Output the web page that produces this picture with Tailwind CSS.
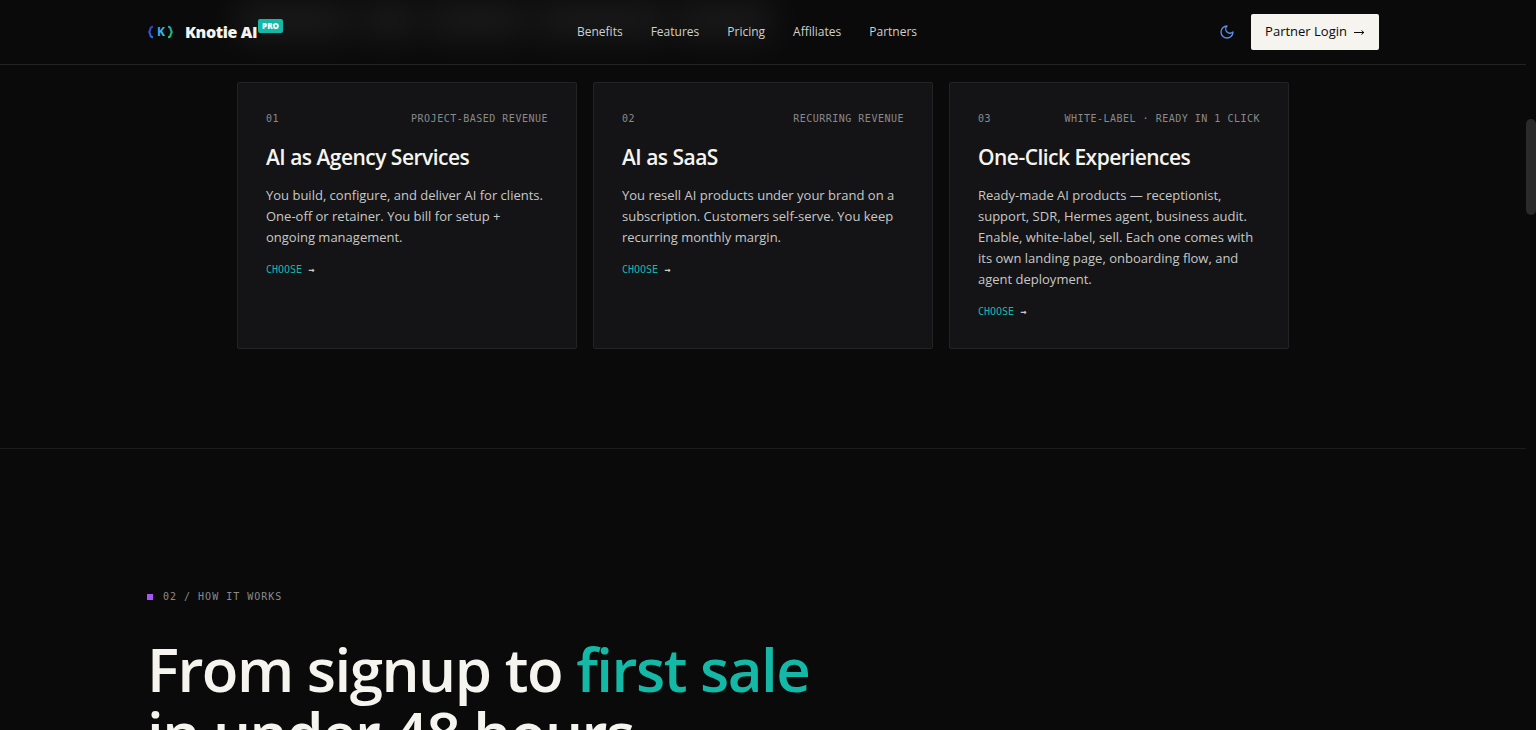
<!DOCTYPE html>
<html lang="en">
<head>
    <meta charset="UTF-8">
    <meta name="viewport" content="width=device-width, initial-scale=1.0">
    <title>Knotie AI Pro</title>
    <script src="https://cdn.jsdelivr.net/npm/@tailwindcss/browser@4"></script>
</head>
<body class="h-screen overflow-hidden bg-[#0a0a0a] text-[#f5f4ef] font-['Open_Sans','Noto_Sans',sans-serif]">
    <div class="flex h-full">
        <div class="flex-1 min-w-0 overflow-hidden">

            <!-- Header -->
            <header class="relative overflow-hidden border-b border-[#232325]">
                <!-- soft glow under the bar -->
                <div class="absolute inset-x-0 top-0 mx-auto flex h-10 max-w-[1100px] gap-3 px-6 opacity-6 blur-lg" aria-hidden="true">
                    <div class="h-full w-28 bg-white"></div>
                    <div class="h-full w-14 bg-white"></div>
                    <div class="h-full w-24 bg-white"></div>
                    <div class="h-full w-32 bg-white"></div>
                    <div class="h-full w-24 bg-white"></div>
                </div>
                <div class="relative mx-auto flex h-16 max-w-[1280px] items-center justify-between px-6">
                    <a href="#" class="flex items-center gap-3">
                        <svg class="h-7 w-[26px]" viewBox="0 0 26 28" fill="none" xmlns="http://www.w3.org/2000/svg">
                            <defs>
                                <linearGradient id="logo-k" x1="0" y1="0" x2="1" y2="1">
                                    <stop offset="0" stop-color="#3b9cf6" />
                                    <stop offset="1" stop-color="#38cfe8" />
                                </linearGradient>
                                <linearGradient id="logo-left" x1="0" y1="0" x2="0" y2="1">
                                    <stop offset="0" stop-color="#3b3fc4" />
                                    <stop offset="1" stop-color="#2f6be4" />
                                </linearGradient>
                                <linearGradient id="logo-right" x1="0" y1="0" x2="0" y2="1">
                                    <stop offset="0" stop-color="#1fa8a0" />
                                    <stop offset="1" stop-color="#22c07a" />
                                </linearGradient>
                            </defs>
                            <path d="M6 8.800C3.500 8.800 3.200 10.500 3.200 12L2.200 14L3.200 16C3.200 17.500 3.500 19.200 6 19.200" stroke="url(#logo-left)" stroke-width="2" />
                            <path d="M21 8.800C23.500 8.800 23.800 10.500 23.800 12L24.800 14L23.800 16C23.800 17.500 23.500 19.200 21 19.200" stroke="url(#logo-right)" stroke-width="2" />
                            <text x="14" y="18" text-anchor="middle" font-family="Open Sans, sans-serif" font-size="12" font-weight="700" fill="url(#logo-k)">K</text>
                        </svg>
                        <span class="flex items-start">
                            <span class="text-base leading-6 font-extrabold tracking-tight">Knotie AI</span>
                            <span class="-mt-px ml-px rounded-xs bg-[#14b8a6] px-1 text-[8px] leading-[14px] font-extrabold text-white">PRO</span>
                        </span>
                    </a>
                    <nav class="flex items-center gap-7 text-[12px] text-[#d0d0ce]">
                        <a href="#benefits">Benefits</a>
                        <a href="#features">Features</a>
                        <a href="#pricing">Pricing</a>
                        <a href="#affiliates">Affiliates</a>
                        <a href="#partners">Partners</a>
                    </nav>
                    <div class="flex items-center gap-2">
                        <button type="button" aria-label="Toggle theme" class="p-2 text-[#5b8def]">
                            <svg class="size-4" viewBox="0 0 24 24" fill="none" stroke="currentColor" stroke-width="2" stroke-linecap="round" stroke-linejoin="round">
                                <path d="M12 3a6 6 0 0 0 9 9 9 9 0 1 1-9-9Z" />
                            </svg>
                        </button>
                        <a href="#login" class="flex h-9 items-center gap-1.5 rounded-xs bg-[#f5f4ef] px-3.5 text-[13px] font-medium text-[#0a0a0a]">
                            Partner Login
                            <svg class="size-3" viewBox="0 0 12 12" fill="none" stroke="currentColor"><path d="M1 6.500h10M8.500 4.500l2.300 2-2.300 2" /></svg>
                        </a>
                    </div>
                </div>
            </header>

            <!-- Ways to sell -->
            <section class="border-b border-[#1c1c1e] pt-[17px] pb-[99px]">
                <div class="mx-auto max-w-[1100px] px-6">
                    <div class="grid grid-cols-3 gap-4">
                        <a href="#agency" class="block rounded-xs border border-[#232325] bg-[#141416] p-7">
                            <div class="flex justify-between font-['DejaVu_Sans_Mono',monospace] text-[10px] leading-4 tracking-wider text-[#8a8a8c]">
                                <span>01</span>
                                <span>PROJECT-BASED REVENUE</span>
                            </div>
                            <h3 class="mt-4 text-[21px] leading-7 font-semibold tracking-tight">AI as Agency Services</h3>
                            <p class="mt-3.5 text-[13px] leading-[21px] text-[#c8c8c6]">You build, configure, and deliver AI for clients. One-off or retainer. You bill for setup + ongoing management.</p>
                            <div class="mt-3.5 font-['DejaVu_Sans_Mono',monospace] text-[10px] leading-4 text-[#c8c8c6]"><span class="text-[#14b8a6]">CHOOSE</span> <span class="font-bold">→</span></div>
                        </a>
                        <a href="#saas" class="block rounded-xs border border-[#232325] bg-[#141416] p-7">
                            <div class="flex justify-between font-['DejaVu_Sans_Mono',monospace] text-[10px] leading-4 tracking-wider text-[#8a8a8c]">
                                <span>02</span>
                                <span>RECURRING REVENUE</span>
                            </div>
                            <h3 class="mt-4 text-[21px] leading-7 font-semibold tracking-tight">AI as SaaS</h3>
                            <p class="mt-3.5 text-[13px] leading-[21px] text-[#c8c8c6]">You resell AI products under your brand on a subscription. Customers self-serve. You keep recurring monthly margin.</p>
                            <div class="mt-3.5 font-['DejaVu_Sans_Mono',monospace] text-[10px] leading-4 text-[#c8c8c6]"><span class="text-[#14b8a6]">CHOOSE</span> <span class="font-bold">→</span></div>
                        </a>
                        <a href="#one-click" class="block rounded-xs border border-[#232325] bg-[#141416] p-7">
                            <div class="flex justify-between font-['DejaVu_Sans_Mono',monospace] text-[10px] leading-4 tracking-wider text-[#8a8a8c]">
                                <span>03</span>
                                <span>WHITE-LABEL · READY IN 1 CLICK</span>
                            </div>
                            <h3 class="mt-4 text-[21px] leading-7 font-semibold tracking-tight">One-Click Experiences</h3>
                            <p class="mt-3.5 text-[13px] leading-[21px] text-[#c8c8c6]">Ready-made AI products — receptionist, support, SDR, Hermes agent, business audit. Enable, white-label, sell. Each one comes with its own landing page, onboarding flow, and agent deployment.</p>
                            <div class="mt-3.5 font-['DejaVu_Sans_Mono',monospace] text-[10px] leading-4 text-[#c8c8c6]"><span class="text-[#14b8a6]">CHOOSE</span> <span class="font-bold">→</span></div>
                        </a>
                    </div>
                </div>
            </section>

            <!-- How it works -->
            <section class="pt-[140px]">
                <div class="mx-auto max-w-[1280px] px-6">
                    <div class="flex items-center gap-2.5 font-['DejaVu_Sans_Mono',monospace] text-[10px] leading-4 tracking-widest text-[#8a8a8c]">
                        <span class="size-1.5 bg-[#a855f7]"></span>
                        02 / HOW IT WORKS
                    </div>
                    <h2 class="mt-8 text-[60px] leading-16 font-semibold tracking-tight">From signup to <span class="text-[#14b8a6]">first sale</span><br>in under 48 hours.</h2>
                </div>
            </section>
        </div>

        <!-- Scroll track -->
        <div class="w-[10px] shrink-0 pt-[119px]">
            <div class="h-24 rounded-full bg-[#2a2a2b]"></div>
        </div>
    </div>
</body>
</html>
